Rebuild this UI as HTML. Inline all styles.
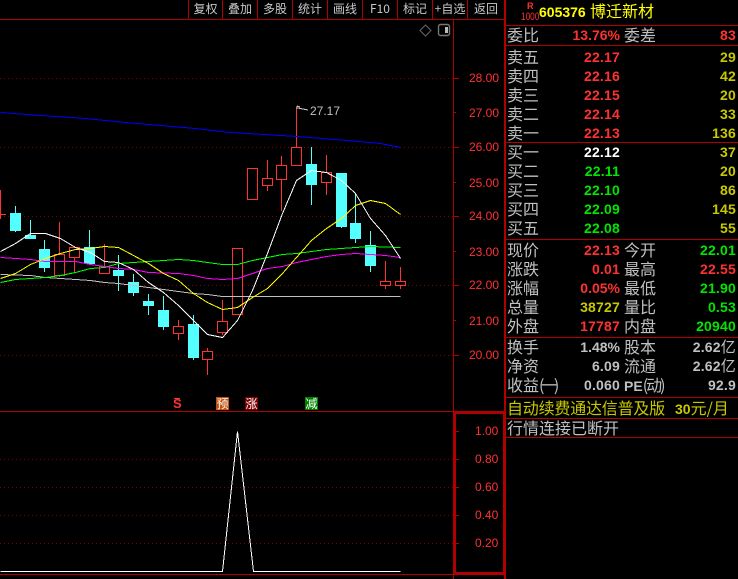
<!DOCTYPE html>
<html><head><meta charset="utf-8">
<style>
html,body{margin:0;padding:0;background:#000;width:738px;height:579px;overflow:hidden}
#w{position:relative;width:738px;height:579px;background:#000;overflow:hidden;font-family:"Liberation Sans","WenQuanYi Zen Hei","Noto Sans CJK SC",sans-serif}
svg{position:absolute;left:0;top:0}
.t,.l,.v,.r,.a{position:absolute;white-space:nowrap}
.t{top:0;height:18px;line-height:18px;font-size:12px;color:#c8c8c8;text-align:center;font-family:"WenQuanYi Zen Hei","Noto Sans CJK SC","Liberation Sans",sans-serif}
.l{font-size:16px;line-height:20px;height:20px;margin-top:-1px;color:#c0c0c0;font-family:"WenQuanYi Zen Hei","Noto Sans CJK SC","Liberation Sans",sans-serif}
.v,.r{font-size:14px;font-weight:bold;line-height:20px;height:20px;text-align:right;letter-spacing:.2px}
.v{right:118px}.r{right:2px}
.a{font-size:12px;line-height:14px;color:#ff3232;left:469px}
.R{color:#ff3232}.G{color:#00e600}.Y{color:#c8c800}.W{color:#fff}.S{color:#c0c0c0}
.b{position:absolute;width:13px;height:13px;top:397px;font-size:12px;line-height:13px;color:#fff;text-align:center;font-family:"WenQuanYi Zen Hei","Noto Sans CJK SC",sans-serif}
</style></head><body><div id="w">
<svg width="738" height="579" viewBox="0 0 738 579" shape-rendering="crispEdges" fill="none">
<g stroke="#800000" stroke-dasharray="1 3">
<path d="M0 78.5H453M0 147.5H453M0 216.5H453M0 285.5H453M0 355.5H453M0 459.5H453M0 487.5H453M0 515.5H453M0 543.5H453"/>
</g>
<path stroke="#ff3232" d="M0.5 190V219M0 214.5H6M59.5 222V254M59.5 275V277M74.5 246V247M74.5 257V273M104.5 244V266M178.5 320V326M178.5 333V340M207.5 348V351M207.5 359V375M222.5 300V321M222.5 332V335M267.5 160V178M267.5 185V191M281.5 156V165M281.5 179V211M296.5 107V147M326.5 155V172M326.5 182V195M385.5 261V281M385.5 285V289M400.5 267V281M400.5 285V289"/>
<path stroke="#54ffff" d="M15.5 206V232M30.5 220V239M44.5 240V272M89.5 230V265M118.5 255V291M133.5 274V296M148.5 294V315M163.5 296V330M193.5 315V360M311.5 147V205M341.5 173V228M355.5 193V243M370.5 231V272"/>
<g fill="#54ffff">
<rect x="10" y="213" width="11" height="18"/><rect x="25" y="235" width="11" height="4"/><rect x="39" y="249" width="11" height="19"/><rect x="84" y="247" width="11" height="17"/><rect x="113" y="270" width="11" height="6"/><rect x="128" y="282" width="11" height="11"/><rect x="143" y="301" width="11" height="5"/><rect x="158" y="310" width="11" height="17"/><rect x="188" y="324" width="11" height="34"/><rect x="306" y="164" width="11" height="21"/><rect x="336" y="173" width="11" height="54"/><rect x="350" y="223" width="11" height="16"/><rect x="365" y="245" width="11" height="21"/>
</g>
<g fill="#000" stroke="#ff3232">
<rect x="54.5" y="254.5" width="10" height="21"/><rect x="69.5" y="247.5" width="10" height="10"/><rect x="99.5" y="266.5" width="10" height="7"/><rect x="173.5" y="326.5" width="10" height="7"/><rect x="202.5" y="351.5" width="10" height="8"/><rect x="217.5" y="321.5" width="10" height="11"/><rect x="232.5" y="248.5" width="10" height="66"/><rect x="247.5" y="168.5" width="10" height="31"/><rect x="262.5" y="178.5" width="10" height="7"/><rect x="276.5" y="165.5" width="10" height="14"/><rect x="291.5" y="147.5" width="10" height="18"/><rect x="321.5" y="172.5" width="10" height="10"/><rect x="380.5" y="281.5" width="10" height="4"/><rect x="395.5" y="281.5" width="10" height="4"/>
</g>
<g transform="translate(.5 .5)">
<polyline stroke="#0000ff" points="0,112 40,115 85,118 125,122 160,125 195,128 230,132 297,136 347,140 380,143 400,147"/>
<polyline stroke="#c0c0c0" points="0,274 30,275 45,277 60,278 75,279 90,280 104,282 118,283 133,285 148,287 163,289 178,291 193,293 207,294 222,296 400,296"/>
<polyline stroke="#00ff00" points="0,282 15,279 30,278 45,277 60,275 75,272 90,268 104,267 118,263 133,262 148,261 163,260 178,259 193,260 207,262 222,264 237,264 252,260 267,257 282,254 296,253 311,251 326,249 355,247 370,246 400,247"/>
<polyline stroke="#ff00ff" points="0,257 30,259 45,261 60,261 75,261 90,264 104,266 118,268 133,269 148,272 178,273 193,275 207,278 222,279 237,278 252,273 267,268 282,266 296,262 311,259 326,256 341,254 355,253 385,255 400,257"/>
<polyline stroke="#ffff00" points="0,278 15,273 30,264 45,258 60,253 75,249 90,248 104,246 118,247 133,255 148,263 163,273 178,280 193,293 207,302 222,309 237,307 252,297 267,288 282,273 296,257 311,240 326,228 341,218 355,205 370,200 385,203 400,214"/>
<polyline stroke="#fff" points="0,251 15,243 30,233 45,233 60,238 75,247 90,252 104,261 118,262 133,269 148,282 163,292 178,305 193,320 207,334 222,337 237,320 252,290 267,253 282,213 296,180 311,170 326,172 341,180 355,193 370,218 385,235 400,258"/>
<polyline stroke="#fff" points="0,571 222,571 237,431 253,571 400,571"/>
</g>
<path stroke="#c0c0c0" d="M297 106V109M297 106L300 107M298 108L303 109L308 110"/>
<g stroke="#b00000">
<path d="M188.5 0V19M222.5 0V19M257.5 0V19M292.5 0V19M327.5 0V19M362.5 0V19M397.5 0V19M432.5 0V19M467.5 0V19"/>
<path d="M0 19.5H505M453.5 19V579M0 411.5H505M0 574.5H505"/>
<path d="M505 25.5H738M505 45.5H738M505 142.5H738M505 239.5H738M505 337.5H738M505 397.5H738M505 418.5H738M505 437.5H738"/>
<path d="M453 78.5H459M453 147.5H459M453 216.5H459M453 285.5H459M453 355.5H459M453 112.5H456M453 182.5H456M453 251.5H456M453 320.5H456"/>
<path d="M453 431.5H459M453 459.5H459M453 487.5H459M453 515.5H459M453 543.5H459M453 445.5H456M453 473.5H456M453 501.5H456M453 529.5H456M453 557.5H456"/>
</g>
<rect x="504" y="0" width="2" height="579" fill="#b00000"/>
<rect x="455" y="413" width="49" height="160" stroke="#b00000" stroke-width="2"/>
<path d="M425.5 25L431 30.5L425.5 36L420 30.5Z" stroke="#666" shape-rendering="auto"/>
<rect x="438.5" y="24.5" width="11" height="11" rx="2" stroke="#777" stroke-width="1.4" shape-rendering="auto"/>
<rect x="445" y="27" width="3" height="6" fill="#bbb"/>
</svg>

<span class="t" style="left:189px;width:33px">复权</span>
<span class="t" style="left:223px;width:34px">叠加</span>
<span class="t" style="left:258px;width:34px">多股</span>
<span class="t" style="left:293px;width:34px">统计</span>
<span class="t" style="left:328px;width:34px">画线</span>
<span class="t" style="left:363px;width:34px">F10</span>
<span class="t" style="left:398px;width:34px">标记</span>
<span class="t" style="left:433px;width:34px">+自选</span>
<span class="t" style="left:468px;width:36px">返回</span>

<span class="a" style="top:71px">28.00</span>
<span class="a" style="top:106px">27.00</span>
<span class="a" style="top:140px">26.00</span>
<span class="a" style="top:176px">25.00</span>
<span class="a" style="top:209px">24.00</span>
<span class="a" style="top:245px">23.00</span>
<span class="a" style="top:278px">22.00</span>
<span class="a" style="top:314px">21.00</span>
<span class="a" style="top:348px">20.00</span>
<span class="a" style="top:424px;left:475px">1.00</span>
<span class="a" style="top:452px;left:475px">0.80</span>
<span class="a" style="top:480px;left:475px">0.60</span>
<span class="a" style="top:508px;left:475px">0.40</span>
<span class="a" style="top:536px;left:475px">0.20</span>
<span class="a" style="top:104px;left:310px;color:#c0c0c0">27.17</span>

<span class="a" style="left:173px;top:397px;font-weight:bold;font-size:13px;width:8px;text-align:center">S</span>
<div style="position:absolute;left:174px;top:398px;width:6px;height:1px;background:#ff3232"></div>
<span class="b" style="left:216px;background:#c05010">预</span>
<span class="b" style="left:245px;background:#800000">涨</span>
<span class="b" style="left:305px;background:#008000">减</span>

<span class="a" style="left:527px;top:1px;font-size:9px;font-weight:bold;line-height:11px">R</span>
<span class="a" style="left:521px;top:12px;font-size:11px;line-height:11px;transform:scaleX(.75);transform-origin:left">1000</span>
<span class="a" style="left:539px;top:3px;font-size:14px;font-weight:bold;line-height:18px;color:#ffff00">605376</span>
<span class="l" style="left:590px;top:1px;color:#ffff00">博迁新材</span>

<span class="l" style="left:507px;top:25px">委比</span><span class="v R" style="top:25px;letter-spacing:0">13.76%</span><span class="l" style="left:624px;top:25px">委差</span><span class="r R" style="top:25px">83</span>
<span class="l" style="left:507px;top:47px">卖五</span><span class="v R" style="top:47px">22.17</span><span class="r Y" style="top:47px">29</span>
<span class="l" style="left:507px;top:66px">卖四</span><span class="v R" style="top:66px">22.16</span><span class="r Y" style="top:66px">42</span>
<span class="l" style="left:507px;top:85px">卖三</span><span class="v R" style="top:85px">22.15</span><span class="r Y" style="top:85px">20</span>
<span class="l" style="left:507px;top:104px">卖二</span><span class="v R" style="top:104px">22.14</span><span class="r Y" style="top:104px">33</span>
<span class="l" style="left:507px;top:123px">卖一</span><span class="v R" style="top:123px">22.13</span><span class="r Y" style="top:123px">136</span>
<span class="l" style="left:507px;top:142px">买一</span><span class="v W" style="top:142px">22.12</span><span class="r Y" style="top:142px">37</span>
<span class="l" style="left:507px;top:161px">买二</span><span class="v G" style="top:161px">22.11</span><span class="r Y" style="top:161px">20</span>
<span class="l" style="left:507px;top:180px">买三</span><span class="v G" style="top:180px">22.10</span><span class="r Y" style="top:180px">86</span>
<span class="l" style="left:507px;top:199px">买四</span><span class="v G" style="top:199px">22.09</span><span class="r Y" style="top:199px">145</span>
<span class="l" style="left:507px;top:218px">买五</span><span class="v G" style="top:218px">22.08</span><span class="r Y" style="top:218px">55</span>

<span class="l" style="left:507px;top:240px">现价</span><span class="v R" style="top:240px">22.13</span><span class="l" style="left:624px;top:240px">今开</span><span class="r G" style="top:240px">22.01</span>
<span class="l" style="left:507px;top:259px">涨跌</span><span class="v R" style="top:259px">0.01</span><span class="l" style="left:624px;top:259px">最高</span><span class="r R" style="top:259px">22.55</span>
<span class="l" style="left:507px;top:278px">涨幅</span><span class="v R" style="top:278px;letter-spacing:0">0.05%</span><span class="l" style="left:624px;top:278px">最低</span><span class="r G" style="top:278px">21.90</span>
<span class="l" style="left:507px;top:297px">总量</span><span class="v Y" style="top:297px">38727</span><span class="l" style="left:624px;top:297px">量比</span><span class="r G" style="top:297px">0.53</span>
<span class="l" style="left:507px;top:316px">外盘</span><span class="v R" style="top:316px">17787</span><span class="l" style="left:624px;top:316px">内盘</span><span class="r G" style="top:316px">20940</span>

<span class="l" style="left:507px;top:337px">换手</span><span class="v S" style="top:337px;letter-spacing:0">1.48%</span><span class="l" style="left:624px;top:337px">股本</span><span class="r S" style="top:337px">2.62<span style="font-weight:normal;font-size:15px;font-family:'WenQuanYi Zen Hei',sans-serif">亿</span></span>
<span class="l" style="left:507px;top:356px">净资</span><span class="v S" style="top:356px">6.09</span><span class="l" style="left:624px;top:356px">流通</span><span class="r S" style="top:356px">2.62<span style="font-weight:normal;font-size:15px;font-family:'WenQuanYi Zen Hei',sans-serif">亿</span></span>
<span class="l" style="left:507px;top:375px">收益<span style="letter-spacing:-3.3px">(一)</span></span><span class="v S" style="top:375px">0.060</span><span class="l" style="left:624px;top:375px"><b style="font-family:'Liberation Sans';font-size:14px">PE</b><span style="letter-spacing:-2px">(动)</span></span><span class="r S" style="top:375px">92.9</span>

<span class="l" style="left:507px;top:398px;color:#c8c800;letter-spacing:-.2px">自动续费通达信普及版</span>
<span class="l" style="left:675px;top:398px;color:#c8c800"><b style="font-family:'Liberation Sans';font-size:14px">30</b>元/月</span>
<span class="l" style="left:507px;top:418px">行情连接已断开</span>
</div></body></html>
